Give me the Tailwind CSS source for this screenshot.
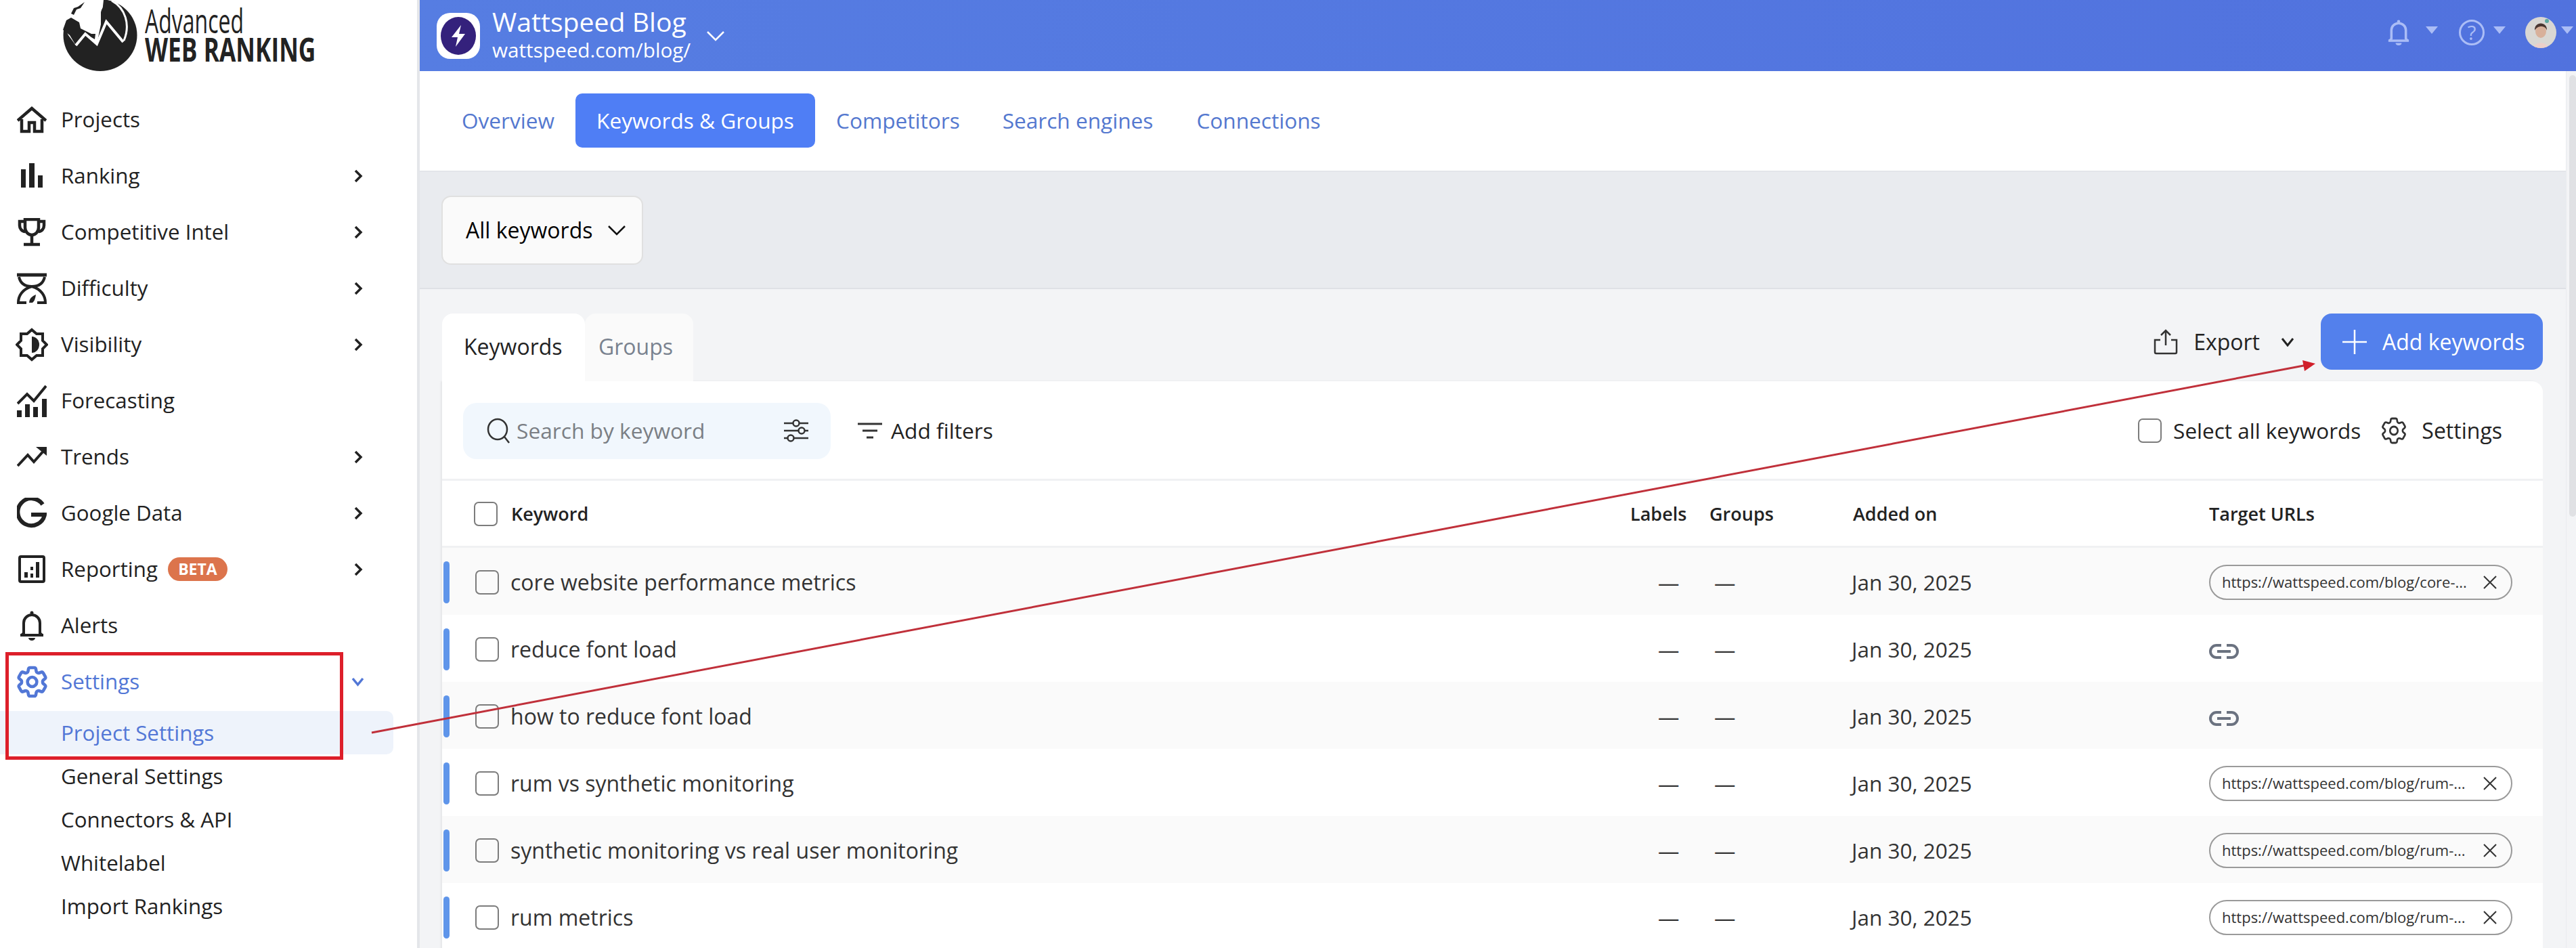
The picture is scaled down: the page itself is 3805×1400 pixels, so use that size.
<!DOCTYPE html>
<html>
  <head>
    <title>Keywords &amp; Groups</title>
    <meta charset="UTF-8" />
    <script src="https://cdn.jsdelivr.net/npm/@tailwindcss/browser@4"></script>
  </head>
  <body class="bg-white">
    <div class="relative flex w-[3805px] h-[1400px] overflow-hidden [font-family:'Open_Sans',sans-serif] text-[32px] text-[#222]">
      <!-- sidebar -->
      <aside class="w-[620px] shrink-0 bg-white border-r-4 border-[#e4e6ea] text-[31.3px]">
        <div class="h-[135px] relative">
          <svg class="absolute left-[93px] top-0" width="110" height="106" viewBox="0 0 110 106">
            <ellipse cx="55" cy="52" rx="54.5" ry="53" fill="#222" />
            <path d="M0 36 L0 0 L60 0 L56 36 L50 65 L33 50 L19 67 L8 52 Z" fill="#fff" />
            <path d="M56 18 C58 8 68 2 76 2 C90 14 96 24 95 37 L86 50 L72 30 L64 30 L56 40 Z" fill="#222" />
            <path d="M5 30 L12 26 L24 33 L26 42 L42 50 L48 50 L47 58 L33 50 L19 67 L10 52 L0 44 Z" fill="#222" />
            <path d="M12 20 L16 12 L22 10 L32 3 L26 12 L20 14 L16 22 Z" fill="#222" />
            <path d="M19 67 L33 50 L50 65 L64 32 L89 62" fill="none" stroke="#fff" stroke-width="4" />
            <path d="M72 1 C92 12 100 36 90 60" fill="none" stroke="#fff" stroke-width="3" />
          </svg>
          <div class="absolute left-[214px] top-[8px] origin-left scale-x-[.64] text-[50px] leading-[44px] whitespace-nowrap">Advanced</div>
          <div class="absolute left-[214px] top-[52px] origin-left scale-x-[.72] text-[49px] leading-[40px] font-bold whitespace-nowrap">WEB RANKING</div>
        </div>
        <nav>
          <div class="h-[83px] flex items-center pl-[25px]">
            <svg class="w-[44px] h-[40px] shrink-0" viewBox="0 0 44 40" fill="none" stroke="#222" stroke-width="4.5"><path d="M1 21 L22 3 L43 21" /><path d="M7 19 V37 H18 V24 H26 V37 H37 V19" /></svg>
            <span class="ml-[21px]">Projects</span>
          </div>
          <div class="h-[83px] flex items-center pl-[25px] pr-[80px]">
            <svg class="w-[44px] h-[40px] shrink-0" viewBox="0 0 44 40" fill="#222"><rect x="6" y="10" width="7" height="27" /><rect x="18" y="1" width="8" height="36" /><rect x="31" y="19" width="7" height="18" /></svg>
            <span class="ml-[21px] flex-1">Ranking</span>
            <svg width="13" height="20" viewBox="0 0 13 20" fill="none" stroke="#222" stroke-width="3.5"><path d="M2 2 L10 10 L2 18" /></svg>
          </div>
          <div class="h-[83px] flex items-center pl-[25px] pr-[80px]">
            <svg class="w-[44px] h-[42px] shrink-0" viewBox="0 0 44 42" fill="none" stroke="#222" stroke-width="4.5"><path d="M12 2 H32 V14 A10 11 0 0 1 12 14 Z" /><path d="M12 5 H4 V11 A8 9 0 0 0 12 20 M32 5 H40 V11 A8 9 0 0 1 32 20" /><path d="M22 25 V38 M10 39 H34" /></svg>
            <span class="ml-[21px] flex-1">Competitive Intel</span>
            <svg width="13" height="20" viewBox="0 0 13 20" fill="none" stroke="#222" stroke-width="3.5"><path d="M2 2 L10 10 L2 18" /></svg>
          </div>
          <div class="h-[83px] flex items-center pl-[25px] pr-[80px]">
            <svg class="w-[44px] h-[46px] shrink-0" viewBox="0 0 44 46" fill="none" stroke="#222" stroke-width="4"><path d="M0 3 H44" stroke-width="5" /><path d="M3 6 Q6 20 22 20 Q38 20 41 6" /><path d="M22 20 C8 24 2 34 2 44 H14 M22 20 C36 24 42 34 42 44 H30" /><path d="M18 44 Q18 36 28 32 Q27 41 23 44 Z" fill="#222" stroke="none" /></svg>
            <span class="ml-[21px] flex-1">Difficulty</span>
            <svg width="13" height="20" viewBox="0 0 13 20" fill="none" stroke="#222" stroke-width="3.5"><path d="M2 2 L10 10 L2 18" /></svg>
          </div>
          <div class="h-[83px] flex items-center pl-[23px] pr-[80px]">
            <svg class="w-[48px] h-[50px] shrink-0" viewBox="0 0 48 50" fill="none" stroke="#222" stroke-width="4"><path d="M24 3 L31 9 H40 V19 L46 25 L40 31 V41 H31 L24 47 L17 41 H8 V31 L2 25 L8 19 V9 H17 Z" /><path d="M24 13 A11 12 0 0 1 24 37 Z" fill="#222" stroke="none" /></svg>
            <span class="ml-[19px] flex-1">Visibility</span>
            <svg width="13" height="20" viewBox="0 0 13 20" fill="none" stroke="#222" stroke-width="3.5"><path d="M2 2 L10 10 L2 18" /></svg>
          </div>
          <div class="h-[83px] flex items-center pl-[25px]">
            <svg class="w-[44px] h-[48px] shrink-0" viewBox="0 0 44 48" fill="#222"><rect x="0" y="38" width="7" height="10" /><rect x="12" y="29" width="7" height="19" /><rect x="24" y="33" width="7" height="15" /><rect x="37" y="21" width="7" height="27" /><path d="M1 28 L15 14 L25 24 L43 2" fill="none" stroke="#222" stroke-width="4" /></svg>
            <span class="ml-[21px]">Forecasting</span>
          </div>
          <div class="h-[83px] flex items-center pl-[25px] pr-[80px]">
            <svg class="w-[44px] h-[32px] shrink-0" viewBox="0 0 44 32" fill="none" stroke="#222" stroke-width="4"><path d="M1 29 L16 13 L25 23 L41 5" /><path d="M28 1 H44 V14 Z" fill="#222" stroke="none" /></svg>
            <span class="ml-[21px] flex-1">Trends</span>
            <svg width="13" height="20" viewBox="0 0 13 20" fill="none" stroke="#222" stroke-width="3.5"><path d="M2 2 L10 10 L2 18" /></svg>
          </div>
          <div class="h-[83px] flex items-center pl-[25px] pr-[80px]">
            <svg class="w-[44px] h-[46px] shrink-0" viewBox="0 0 44 46" fill="none" stroke="#222" stroke-width="6"><path d="M38 10 A20 20 0 1 0 41 25 H21" /></svg>
            <span class="ml-[21px] flex-1">Google Data</span>
            <svg width="13" height="20" viewBox="0 0 13 20" fill="none" stroke="#222" stroke-width="3.5"><path d="M2 2 L10 10 L2 18" /></svg>
          </div>
          <div class="h-[83px] flex items-center pl-[27px] pr-[80px]">
            <svg class="w-[40px] h-[41px] shrink-0" viewBox="0 0 40 41" fill="#222"><rect x="2" y="2" width="36" height="37" rx="2" fill="none" stroke="#222" stroke-width="4" /><rect x="9" y="25" width="5" height="8" /><rect x="18" y="17" width="4" height="5" /><rect x="18" y="27" width="4" height="6" /><rect x="26" y="10" width="5" height="23" /></svg>
            <span class="ml-[23px]">Reporting</span>
            <span class="ml-[15px] h-[35px] w-[88px] rounded-[18px] bg-[#dc744c] text-white text-[23px] font-bold flex items-center justify-center">BETA</span>
            <span class="flex-1"></span>
            <svg width="13" height="20" viewBox="0 0 13 20" fill="none" stroke="#222" stroke-width="3.5"><path d="M2 2 L10 10 L2 18" /></svg>
          </div>
          <div class="h-[83px] flex items-center pl-[29px]">
            <svg class="w-[36px] h-[44px] shrink-0" viewBox="0 0 36 44" fill="none" stroke="#222" stroke-width="4"><path d="M6 34 V18 A12 12 0 0 1 30 18 V34" /><path d="M1 36 H35" stroke-width="4" /><path d="M3 36 L6 33 M33 36 L30 33" /><circle cx="18" cy="3" r="2.5" fill="#222" stroke="none" /><path d="M13 40 H23 A5 4 0 0 1 13 40 Z" fill="#222" stroke="none" /></svg>
            <span class="ml-[25px]">Alerts</span>
          </div>
          <div class="h-[83px] flex items-center pl-[20px] pr-[78px] text-[#5277d6]">
            <svg class="w-[55px] h-[56px] shrink-0" viewBox="0 0 24 24" preserveAspectRatio="none" fill="none" stroke="#5277d6" stroke-width="2"><path d="M9.594 3.94c.09-.542.56-.94 1.11-.94h2.593c.55 0 1.02.398 1.11.94l.213 1.281c.063.374.313.686.645.87.074.04.147.083.22.127.325.196.72.257 1.075.124l1.217-.456a1.125 1.125 0 0 1 1.37.49l1.296 2.247a1.125 1.125 0 0 1-.26 1.431l-1.003.827c-.293.241-.438.613-.43.992a7.723 7.723 0 0 1 0 .255c-.008.378.137.75.43.991l1.004.827c.424.35.534.955.26 1.43l-1.298 2.247a1.125 1.125 0 0 1-1.369.491l-1.217-.456c-.355-.133-.75-.072-1.076.124a6.47 6.47 0 0 1-.22.128c-.331.183-.581.495-.644.869l-.213 1.281c-.09.543-.56.94-1.11.94h-2.594c-.55 0-1.019-.398-1.11-.94l-.213-1.281c-.062-.374-.312-.686-.644-.87a6.52 6.52 0 0 1-.22-.127c-.325-.196-.72-.257-1.076-.124l-1.217.456a1.125 1.125 0 0 1-1.369-.49l-1.297-2.247a1.125 1.125 0 0 1 .26-1.431l1.004-.827c.292-.24.437-.613.43-.991a6.932 6.932 0 0 1 0-.255c.007-.38-.138-.751-.43-.992l-1.004-.827a1.125 1.125 0 0 1-.26-1.43l1.297-2.247a1.125 1.125 0 0 1 1.37-.491l1.216.456c.356.133.751.072 1.076-.124.072-.044.146-.086.22-.128.332-.183.582-.495.644-.869l.214-1.28Z" /><circle cx="12" cy="12" r="3" /></svg>
            <span class="ml-[15px] flex-1">Settings</span>
            <svg width="19" height="14" viewBox="0 0 19 14" fill="none" stroke="#5277d6" stroke-width="3.5"><path d="M2 2 L9.5 11 L17 2" /></svg>
          </div>
          <div class="mt-[2px] h-[64px] w-[581px] flex items-center pl-[90px] pt-[1px] bg-[#eef3fb] rounded-r-[10px] text-[#5277d6]">Project Settings</div>
          <div class="h-[64px] flex items-center pl-[90px] pt-[1px]">General Settings</div>
          <div class="h-[64px] flex items-center pl-[90px] pt-[1px]">Connectors &amp; API</div>
          <div class="h-[64px] flex items-center pl-[90px] pt-[1px]">Whitelabel</div>
          <div class="h-[64px] flex items-center pl-[90px] pt-[1px]">Import Rankings</div>
        </nav>
      </aside>

      <!-- main column -->
      <main class="flex-1 min-w-0 flex flex-col bg-[#f3f4f6]">
        <header class="h-[105px] shrink-0 flex items-center pl-[25px] bg-gradient-to-r from-[#567de2] to-[#5172de] text-white">
          <div class="w-[64px] h-[68px] rounded-[20px] bg-white flex items-center justify-center">
            <svg width="52" height="56" viewBox="0 0 52 56"><ellipse cx="26" cy="28" rx="26" ry="28" fill="#34217c" /><path d="M30 12 L16 30 H25 L22 44 L36 25 H27 Z" fill="#fff" /></svg>
          </div>
          <div class="ml-[18px] flex flex-col mt-[-4px]">
            <div class="text-[39.2px] leading-[46px]">Wattspeed Blog</div>
            <div class="text-[29.7px] leading-[38px]">wattspeed.com/blog/</div>
          </div>
          <svg class="ml-[23px]" width="28" height="16" viewBox="0 0 28 16" fill="none" stroke="#fff" stroke-width="2.5"><path d="M2 2 L14 14 L26 2" /></svg>
          <div class="flex-1"></div>
          <svg class="mt-[-9px]" width="32" height="38" viewBox="0 0 36 44" preserveAspectRatio="none" fill="none" stroke="#abbdf6" stroke-width="4"><path d="M6 34 V18 A12 12 0 0 1 30 18 V34" /><path d="M1 36 H35" /><path d="M3 36 L6 33 M33 36 L30 33" /><circle cx="18" cy="3" r="2.5" fill="#abbdf6" stroke="none" /><path d="M13 40 H23 A5 4 0 0 1 13 40 Z" fill="#abbdf6" stroke="none" /></svg>
          <div class="ml-[24px] mt-[-16px] w-0 h-0 border-l-[9px] border-r-[9px] border-t-[11px] border-l-transparent border-r-transparent border-t-[#abbdf6]"></div>
          <div class="ml-[31px] mt-[-9px] w-[38px] h-[38px] rounded-full border-[3px] border-[#abbdf6] text-[#abbdf6] text-[30px] leading-none flex items-center justify-center">?</div>
          <div class="ml-[13px] mt-[-16px] w-0 h-0 border-l-[9px] border-r-[9px] border-t-[11px] border-l-transparent border-r-transparent border-t-[#abbdf6]"></div>
          <svg class="ml-[29px] mt-[-9px]" width="46" height="46" viewBox="0 0 46 46">
            <clipPath id="av"><circle cx="23" cy="23" r="23" /></clipPath>
            <g clip-path="url(#av)"><rect width="46" height="46" fill="#d9d7d3" /><path d="M12 46 C14 36 32 36 34 46 Z" fill="#eccfc9" /><ellipse cx="23" cy="21" rx="8" ry="10" fill="#d8b09a" /><path d="M14 20 C13 6 33 6 32 20 C30 12 18 12 14 20 Z" fill="#4a3630" /></g>
            <circle cx="32" cy="6" r="3" fill="#5aa9a0" />
          </svg>
          <div class="ml-[7px] mt-[-16px] w-0 h-0 border-l-[9px] border-r-[9px] border-t-[11px] border-l-transparent border-r-transparent border-t-[#abbdf6] mr-[4px]"></div>
        </header>

        <div class="flex-1 min-h-0 flex">
          <div class="flex-1 min-w-0 flex flex-col">
            <!-- sub navigation -->
            <div class="h-[149px] shrink-0 bg-white border-b-2 border-[#e3e5ea] flex items-center pl-[62px] pb-[2px] text-[#5478cf] text-[31.6px]">
              <span class="mr-[31px]">Overview</span>
              <span class="h-[80px] w-[354px] rounded-[10px] bg-[#4f7ef5] text-white flex items-center justify-center">Keywords &amp; Groups</span>
              <span class="ml-[31px]">Competitors</span>
              <span class="ml-[63px]">Search engines</span>
              <span class="ml-[64px]">Connections</span>
            </div>
            <!-- filter band -->
            <div class="h-[173px] shrink-0 bg-[#e9ebef] border-b-2 border-[#dfe1e6] flex items-center pl-[32px]">
              <div class="w-[298px] h-[102px] rounded-[14px] bg-[#fafafa] border-2 border-[#e0e0e0] flex items-center pl-[34px] text-black">
                All keywords
                <svg class="ml-[22px]" width="28" height="16" viewBox="0 0 28 16" fill="none" stroke="#111" stroke-width="2.5"><path d="M2 2 L14 14 L26 2" /></svg>
              </div>
            </div>
            <!-- keyword table -->
            <div class="flex-1 min-h-0 pl-[33px] pr-[34px] pt-[36px]">
              <div class="h-[100px] flex items-start">
                <div class="h-[100px] w-[211px] rounded-t-[16px] bg-white flex items-center pl-[32px] pb-[2px]">Keywords</div>
                <div class="h-[100px] w-[160px] rounded-t-[16px] bg-[#fafafa] text-[#79828f] flex items-center pl-[20px] pb-[2px]">Groups</div>
                <div class="flex-1"></div>
                <div class="h-[83px] flex items-center">
                  <svg width="36" height="38" viewBox="0 0 36 38" fill="none" stroke="#333" stroke-width="2.5"><path d="M18 24 V2 M11 9 L18 2 L25 9" /><path d="M10 16 H2 V34 Q2 36 4 36 H32 Q34 36 34 34 V16 H26" /></svg>
                  <span class="ml-[23px]">Export</span>
                  <svg class="ml-[31px]" width="20" height="14" viewBox="0 0 20 14" fill="none" stroke="#222" stroke-width="3"><path d="M2 2 L10 12 L18 2" /></svg>
                  <div class="ml-[39px] w-[328px] h-[83px] rounded-[16px] bg-[#5380ec] text-white flex items-center pl-[32px]">
                    <svg width="36" height="36" viewBox="0 0 36 36" fill="none" stroke="#fff" stroke-width="2.5"><path d="M18 0 V36 M0 18 H36" /></svg>
                    <span class="ml-[23px]">Add keywords</span>
                  </div>
                </div>
              </div>
              <div class="bg-white rounded-tr-[16px] shadow-[-2px_0_3px_rgba(0,0,0,0.06)]">
                <div class="h-[147px] border-b-[3px] border-[#f0f1f3] flex items-center pl-[31px] pr-[60px] pt-[2px]">
                  <div class="w-[543px] h-[83px] rounded-[20px] bg-[#f1f7fd] flex items-center pl-[34px] text-[#7b7f85] text-[31.7px]">
                    <svg class="shrink-0" width="36" height="40" viewBox="0 0 36 40" fill="none" stroke="#333" stroke-width="2.5"><ellipse cx="17" cy="18" rx="14" ry="15" /><path d="M27 29 L34 38" /></svg>
                    <span class="ml-[9px] flex-1 whitespace-nowrap">Search by keyword</span>
                    <svg class="shrink-0 mr-[33px]" width="36" height="34" viewBox="0 0 36 34" fill="none" stroke="#333" stroke-width="2.5"><path d="M0 6 H36 M0 17 H36 M0 28 H36" /><circle cx="18" cy="6" r="4.5" fill="#f1f7fd" /><circle cx="26" cy="17" r="4.5" fill="#f1f7fd" /><circle cx="10" cy="28" r="4.5" fill="#f1f7fd" /></svg>
                  </div>
                  <svg class="ml-[40px]" width="36" height="24" viewBox="0 0 36 24" fill="none" stroke="#333" stroke-width="3"><path d="M0 2 H36 M7 12 H29 M13 22 H23" /></svg>
                  <span class="ml-[13px] text-[31.7px]">Add filters</span>
                  <div class="flex-1"></div>
                  <div class="w-[35px] h-[36px] rounded-[7px] border-2 border-[#7c7c7c]"></div>
                  <span class="ml-[17px] text-[31.5px]">Select all keywords</span>
                  <svg class="ml-[26px]" width="46" height="48" viewBox="0 0 24 24" preserveAspectRatio="none" fill="none" stroke="#333" stroke-width="1.4"><path d="M9.594 3.94c.09-.542.56-.94 1.11-.94h2.593c.55 0 1.02.398 1.11.94l.213 1.281c.063.374.313.686.645.87.074.04.147.083.22.127.325.196.72.257 1.075.124l1.217-.456a1.125 1.125 0 0 1 1.37.49l1.296 2.247a1.125 1.125 0 0 1-.26 1.431l-1.003.827c-.293.241-.438.613-.43.992a7.723 7.723 0 0 1 0 .255c-.008.378.137.75.43.991l1.004.827c.424.35.534.955.26 1.43l-1.298 2.247a1.125 1.125 0 0 1-1.369.491l-1.217-.456c-.355-.133-.75-.072-1.076.124a6.47 6.47 0 0 1-.22.128c-.331.183-.581.495-.644.869l-.213 1.281c-.09.543-.56.94-1.11.94h-2.594c-.55 0-1.019-.398-1.11-.94l-.213-1.281c-.062-.374-.312-.686-.644-.87a6.52 6.52 0 0 1-.22-.127c-.325-.196-.72-.257-1.076-.124l-1.217.456a1.125 1.125 0 0 1-1.369-.49l-1.297-2.247a1.125 1.125 0 0 1 .26-1.431l1.004-.827c.292-.24.437-.613.43-.991a6.932 6.932 0 0 1 0-.255c.007-.38-.138-.751-.43-.992l-1.004-.827a1.125 1.125 0 0 1-.26-1.43l1.297-2.247a1.125 1.125 0 0 1 1.37-.491l1.216.456c.356.133.751.072 1.076-.124.072-.044.146-.086.22-.128.332-.183.582-.495.644-.869l.214-1.28Z" /><circle cx="12" cy="12" r="3" /></svg>
                  <span class="ml-[18px]">Settings</span>
                </div>
                <!-- table head -->
                <div class="h-[99px] pt-[2px] border-b-[3px] border-[#f0f1f3] grid grid-cols-[102px_1653px_117px_212px_526px_1fr] items-center text-[27px] font-[550]">
                  <div class="pl-[47px]"><div class="w-[35px] h-[36px] rounded-[7px] border-2 border-[#7c7c7c]"></div></div>
                  <div>Keyword</div><div>Labels</div><div>Groups</div><div>Added on</div><div>Target URLs</div>
                </div>
                <!-- rows -->
                <div class="h-[99px] pt-[2px] bg-[#fafafa] grid grid-cols-[101px_1654px_117px_210px_528px_1fr] items-center text-[#333] text-[31.5px]">
                  <div class="flex items-center pl-[2px]"><div class="w-[9px] h-[62px] rounded-full bg-[#5f95ea]"></div><div class="ml-[38px] w-[35px] h-[36px] rounded-[7px] border-2 border-[#7c7c7c]"></div></div>
                  <div class="text-[32px]">core website performance metrics</div><div class="pl-[41px]">—</div><div class="pl-[7px]">—</div><div>Jan 30, 2025</div>
                  <div class="w-[448px] h-[52px] rounded-full border-2 border-[#9a9a9a] flex items-center pl-[17px] text-[22px]">https://wattspeed.com/blog/core-...<svg class="ml-auto mr-[20px]" width="22" height="22" viewBox="0 0 22 22" fill="none" stroke="#333" stroke-width="2"><path d="M2 2 L20 20 M20 2 L2 20" /></svg></div>
                </div>
                <div class="h-[99px] pt-[2px] bg-white grid grid-cols-[101px_1654px_117px_210px_528px_1fr] items-center text-[#333] text-[31.5px]">
                  <div class="flex items-center pl-[2px]"><div class="w-[9px] h-[62px] rounded-full bg-[#5f95ea]"></div><div class="ml-[38px] w-[35px] h-[36px] rounded-[7px] border-2 border-[#7c7c7c]"></div></div>
                  <div class="text-[32px]">reduce font load</div><div class="pl-[41px]">—</div><div class="pl-[7px]">—</div><div>Jan 30, 2025</div>
                  <svg class="mt-[6px]" width="44" height="22" viewBox="0 0 44 22" fill="none" stroke="#6b7280" stroke-width="4"><path d="M18 2 H11 A9 9 0 0 0 11 20 H18 M26 2 H33 A9 9 0 0 1 33 20 H26 M12 11 H32" /></svg>
                </div>
                <div class="h-[99px] pt-[2px] bg-[#fafafa] grid grid-cols-[101px_1654px_117px_210px_528px_1fr] items-center text-[#333] text-[31.5px]">
                  <div class="flex items-center pl-[2px]"><div class="w-[9px] h-[62px] rounded-full bg-[#5f95ea]"></div><div class="ml-[38px] w-[35px] h-[36px] rounded-[7px] border-2 border-[#7c7c7c]"></div></div>
                  <div class="text-[32px]">how to reduce font load</div><div class="pl-[41px]">—</div><div class="pl-[7px]">—</div><div>Jan 30, 2025</div>
                  <svg class="mt-[6px]" width="44" height="22" viewBox="0 0 44 22" fill="none" stroke="#6b7280" stroke-width="4"><path d="M18 2 H11 A9 9 0 0 0 11 20 H18 M26 2 H33 A9 9 0 0 1 33 20 H26 M12 11 H32" /></svg>
                </div>
                <div class="h-[99px] pt-[2px] bg-white grid grid-cols-[101px_1654px_117px_210px_528px_1fr] items-center text-[#333] text-[31.5px]">
                  <div class="flex items-center pl-[2px]"><div class="w-[9px] h-[62px] rounded-full bg-[#5f95ea]"></div><div class="ml-[38px] w-[35px] h-[36px] rounded-[7px] border-2 border-[#7c7c7c]"></div></div>
                  <div class="text-[32px]">rum vs synthetic monitoring</div><div class="pl-[41px]">—</div><div class="pl-[7px]">—</div><div>Jan 30, 2025</div>
                  <div class="w-[448px] h-[52px] rounded-full border-2 border-[#9a9a9a] flex items-center pl-[17px] text-[22px]">https://wattspeed.com/blog/rum-...<svg class="ml-auto mr-[20px]" width="22" height="22" viewBox="0 0 22 22" fill="none" stroke="#333" stroke-width="2"><path d="M2 2 L20 20 M20 2 L2 20" /></svg></div>
                </div>
                <div class="h-[99px] pt-[2px] bg-[#fafafa] grid grid-cols-[101px_1654px_117px_210px_528px_1fr] items-center text-[#333] text-[31.5px]">
                  <div class="flex items-center pl-[2px]"><div class="w-[9px] h-[62px] rounded-full bg-[#5f95ea]"></div><div class="ml-[38px] w-[35px] h-[36px] rounded-[7px] border-2 border-[#7c7c7c]"></div></div>
                  <div class="text-[32px]">synthetic monitoring vs real user monitoring</div><div class="pl-[41px]">—</div><div class="pl-[7px]">—</div><div>Jan 30, 2025</div>
                  <div class="w-[448px] h-[52px] rounded-full border-2 border-[#9a9a9a] flex items-center pl-[17px] text-[22px]">https://wattspeed.com/blog/rum-...<svg class="ml-auto mr-[20px]" width="22" height="22" viewBox="0 0 22 22" fill="none" stroke="#333" stroke-width="2"><path d="M2 2 L20 20 M20 2 L2 20" /></svg></div>
                </div>
                <div class="h-[99px] pt-[2px] bg-white grid grid-cols-[101px_1654px_117px_210px_528px_1fr] items-center text-[#333] text-[31.5px]">
                  <div class="flex items-center pl-[2px]"><div class="w-[9px] h-[62px] rounded-full bg-[#5f95ea]"></div><div class="ml-[38px] w-[35px] h-[36px] rounded-[7px] border-2 border-[#7c7c7c]"></div></div>
                  <div class="text-[32px]">rum metrics</div><div class="pl-[41px]">—</div><div class="pl-[7px]">—</div><div>Jan 30, 2025</div>
                  <div class="w-[448px] h-[52px] rounded-full border-2 border-[#9a9a9a] flex items-center pl-[17px] text-[22px]">https://wattspeed.com/blog/rum-...<svg class="ml-auto mr-[20px]" width="22" height="22" viewBox="0 0 22 22" fill="none" stroke="#333" stroke-width="2"><path d="M2 2 L20 20 M20 2 L2 20" /></svg></div>
                </div>
              </div>
            </div>
          </div>
          <!-- page scrollbar -->
          <div class="w-[15px] shrink-0 bg-[#f3f4f6] border-l border-[#e9ebef] pt-[6px] flex justify-end">
            <div class="w-[10px] h-[652px] rounded-[6px] bg-[#e0e1e4]"></div>
          </div>
        </div>
      </main>

      <!-- red annotation drawn on top of the screenshot -->
      <div class="absolute left-[8px] top-[963px] w-[499px] h-[159px] border-[5px] border-[#dd1f2a]"></div>
      <svg class="absolute left-0 top-0 pointer-events-none" width="3805" height="1400">
        <line x1="549" y1="1082" x2="3405" y2="539.5" stroke="#c0303a" stroke-width="3" />
        <polygon points="3420,537 3401,532 3404,548" fill="#d11f2a" />
      </svg>
    </div>
  </body>
</html>
